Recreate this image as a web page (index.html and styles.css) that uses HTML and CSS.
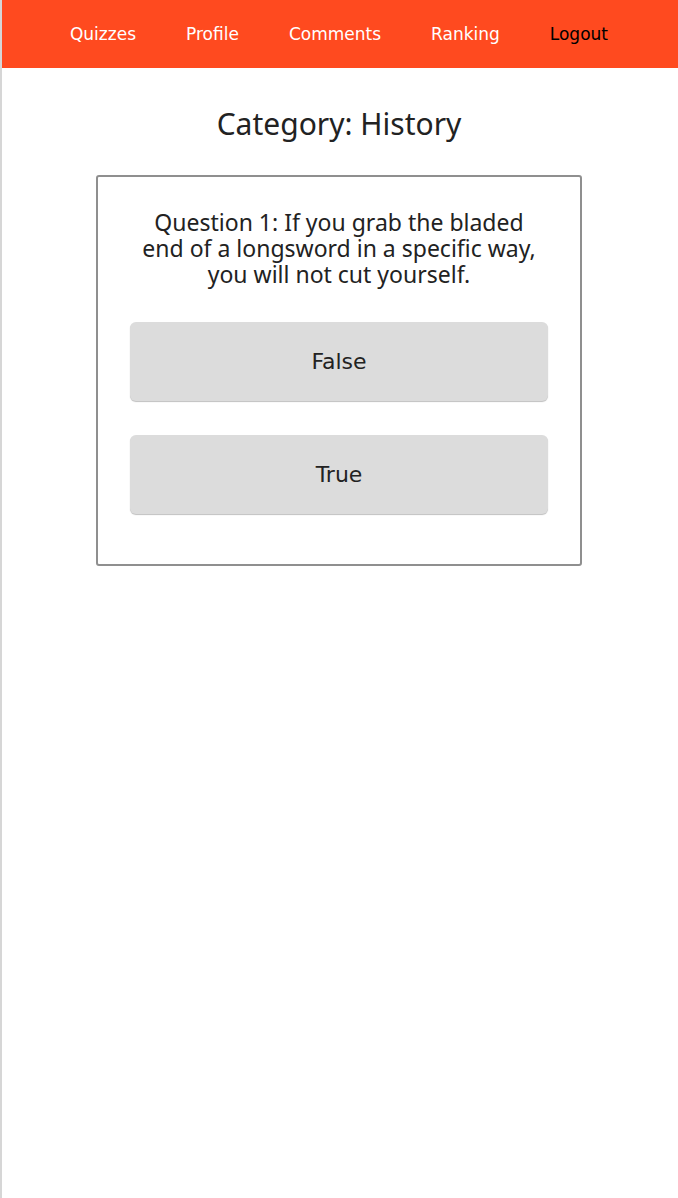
FILE: index.html
```html
<!DOCTYPE html>
<html lang="en">
<head>
<meta charset="utf-8">
<title>Quiz</title>
<link rel="stylesheet" href="styles.css">
</head>
<body>
<div class="page">
  <header class="topbar">
    <nav class="nav">
      <a class="nav-link" href="#">Quizzes</a>
      <a class="nav-link" href="#">Profile</a>
      <a class="nav-link" href="#">Comments</a>
      <a class="nav-link" href="#">Ranking</a>
      <a class="nav-link nav-link-dark" href="#">Logout</a>
    </nav>
  </header>
  <main class="content">
    <h1 class="title">Category: History</h1>
    <section class="card">
      <p class="question">Question 1: If you grab the bladed end of a longsword in a specific way, you will not cut yourself.</p>
      <div class="answers">
        <button class="answer">False</button>
        <button class="answer">True</button>
      </div>
    </section>
  </main>
</div>
</body>
</html>
```

FILE: styles.css
```css
html, body {
  margin: 0;
  padding: 0;
  height: 100%;
}
body {
  background: #ffffff;
  font-family: "Noto Sans", "Open Sans", sans-serif;
  color: #222222;
}
.page {
  min-height: 100%;
  border-left: 2px solid #d6d6d6;
  box-sizing: border-box;
}
.topbar {
  height: 68px;
  background: #ff4a1f;
  display: flex;
  align-items: center;
  justify-content: center;
  padding-right: 2px;
}
.nav {
  display: flex;
  gap: 50px;
  padding-bottom: 1px;
}
.nav-link {
  color: #ffffff;
  text-decoration: none;
  font-family: "DejaVu Sans", sans-serif;
  font-size: 17px;
}
.nav-link-dark {
  color: #000000;
}
.content {
  display: flex;
  flex-direction: column;
  align-items: center;
  padding-top: 36px;
  padding-right: 2px;
}
.title {
  margin: 0;
  font-size: 30px;
  font-weight: 400;
  line-height: 40px;
  color: #222222;
}
.card {
  margin-top: 31px;
  width: 486px;
  box-sizing: border-box;
  border: 2px solid #8f8f8f;
  border-radius: 3px;
  padding: 32px 32px 50px;
  display: flex;
  flex-direction: column;
  align-items: stretch;
}
.question {
  margin: 0 auto;
  width: 400px;
  font-size: 23px;
  line-height: 26px;
  text-align: center;
  color: #222222;
}
.answers {
  display: flex;
  flex-direction: column;
  gap: 34px;
  margin-top: 35px;
}
.answer {
  height: 79px;
  border: none;
  border-radius: 6px;
  background: #dcdcdc;
  box-shadow: 0 1px 1px rgba(0,0,0,0.25);
  font-family: "DejaVu Sans", sans-serif;
  font-size: 22px;
  color: #222222;
  cursor: pointer;
}
```
